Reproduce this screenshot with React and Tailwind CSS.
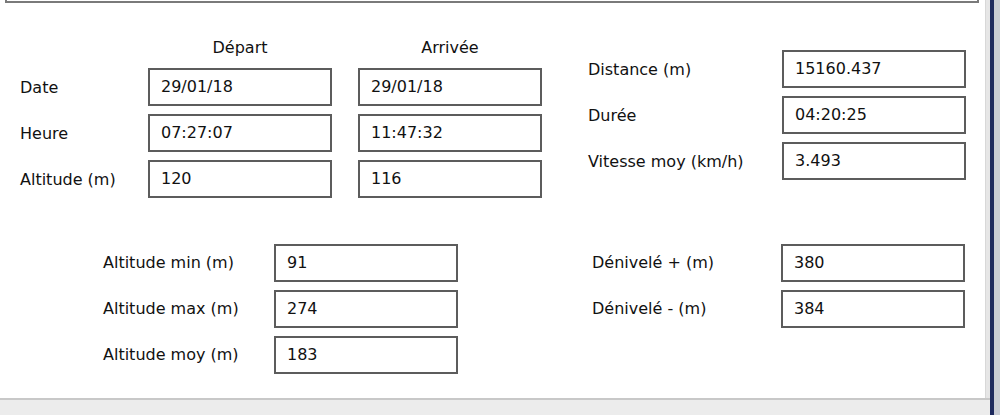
const depart = [
  { label: "Date", dep: "29/01/18", arr: "29/01/18" },
  { label: "Heure", dep: "07:27:07", arr: "11:47:32" },
  { label: "Altitude (m)", dep: "120", arr: "116" },
]

const resume = [
  { label: "Distance (m)", value: "15160.437" },
  { label: "Durée", value: "04:20:25" },
  { label: "Vitesse moy (km/h)", value: "3.493" },
]

const altitudes = [
  { label: "Altitude min (m)", value: "91" },
  { label: "Altitude max (m)", value: "274" },
  { label: "Altitude moy (m)", value: "183" },
]

const denivele = [
  { label: "Dénivelé + (m)", value: "380" },
  { label: "Dénivelé - (m)", value: "384" },
]

const Field = ({ value }) => (
  <div className="w-[184px] h-[38px] border-2 border-[#5c5c5c] bg-white flex items-center pl-[11px]">
    {value}
  </div>
)

const App = () => {
  return (
    <div
      className="w-[1000px] h-[415px] flex bg-[#1b2440] text-[16px] text-[#111] overflow-hidden"
      style={{ fontFamily: '"DejaVu Sans", Tahoma, sans-serif' }}
    >
      <div className="w-[990px] flex flex-col bg-[#efefef]">
        <div className="flex-1 flex bg-white">
          <div className="flex-1 flex flex-col">
            <div className="ml-[5px] w-[974px] h-[3px] border-x-2 border-b-2 border-[#7a7a7a]" />

            {/* haut */}
            <div className="flex">
              <div className="ml-[20px] mt-[33px] flex flex-col">
                <div className="flex h-[22px] mb-[10px]">
                  <div className="w-[128px]" />
                  <div className="w-[184px] text-center">Départ</div>
                  <div className="w-[26px]" />
                  <div className="w-[184px] text-center">Arrivée</div>
                </div>
                <div className="flex flex-col gap-[8px]">
                  {depart.map((row) => (
                    <div key={row.label} className="flex items-center">
                      <div className="w-[128px] mt-[2px]">{row.label}</div>
                      <Field value={row.dep} />
                      <div className="w-[26px]" />
                      <Field value={row.arr} />
                    </div>
                  ))}
                </div>
              </div>

              <div className="ml-[46px] mt-[47px] flex flex-col gap-[8px]">
                {resume.map((row) => (
                  <div key={row.label} className="flex items-center">
                    <div className="w-[194px] mt-[2px]">{row.label}</div>
                    <Field value={row.value} />
                  </div>
                ))}
              </div>
            </div>

            {/* bas */}
            <div className="flex mt-[46px]">
              <div className="ml-[103px] flex flex-col gap-[8px]">
                {altitudes.map((row) => (
                  <div key={row.label} className="flex items-center">
                    <div className="w-[171px]">{row.label}</div>
                    <Field value={row.value} />
                  </div>
                ))}
              </div>
              <div className="ml-[134px] flex flex-col gap-[8px]">
                {denivele.map((row) => (
                  <div key={row.label} className="flex items-center">
                    <div className="w-[189px]">{row.label}</div>
                    <Field value={row.value} />
                  </div>
                ))}
              </div>
            </div>
          </div>
          <div className="w-[5px] bg-[#e6e6e6] border-l border-[#d8d8d8]" />
        </div>
        <div className="h-[2px] bg-[#c8c8c8]" />
        <div className="h-[15px] bg-[#ececec]" />
      </div>
      <div className="w-[4px] bg-[#1e2a5e]" />
      <div className="flex-1 bg-[#c9ccd4]" />
    </div>
  )
}

export default App
